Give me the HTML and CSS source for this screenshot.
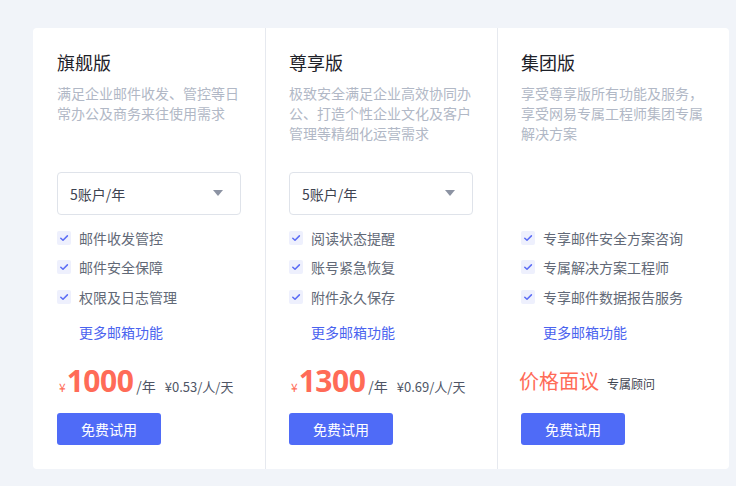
FILE: index.html
```html
<!DOCTYPE html>
<html lang="zh">
<head>
<meta charset="utf-8">
<link rel="stylesheet" href="styles.css">
</head>
<body>
<div class="card">
  <div class="col">
    <div class="title">旗舰版</div>
    <div class="desc">满足企业邮件收发、管控等日常办公及商务来往使用需求</div>
    <div class="select"><span>5账户/年</span><i class="arrow"></i></div>
    <ul class="features">
      <li><span class="chk"><svg viewBox="0 0 14 14"><path d="M3.8 7.2 L6 9.3 L10.4 4.9" /></svg></span>邮件收发管控</li>
      <li><span class="chk"><svg viewBox="0 0 14 14"><path d="M3.8 7.2 L6 9.3 L10.4 4.9" /></svg></span>邮件安全保障</li>
      <li><span class="chk"><svg viewBox="0 0 14 14"><path d="M3.8 7.2 L6 9.3 L10.4 4.9" /></svg></span>权限及日志管理</li>
    </ul>
    <a class="more">更多邮箱功能</a>
    <div class="price"><span class="yen">¥</span><span class="num">1000</span><span class="unit">/年</span><span class="per">¥0.53/人/天</span></div>
    <button class="btn">免费试用</button>
  </div>
  <div class="col">
    <div class="title">尊享版</div>
    <div class="desc">极致安全满足企业高效协同办公、打造个性企业文化及客户管理等精细化运营需求</div>
    <div class="select"><span>5账户/年</span><i class="arrow"></i></div>
    <ul class="features">
      <li><span class="chk"><svg viewBox="0 0 14 14"><path d="M3.8 7.2 L6 9.3 L10.4 4.9" /></svg></span>阅读状态提醒</li>
      <li><span class="chk"><svg viewBox="0 0 14 14"><path d="M3.8 7.2 L6 9.3 L10.4 4.9" /></svg></span>账号紧急恢复</li>
      <li><span class="chk"><svg viewBox="0 0 14 14"><path d="M3.8 7.2 L6 9.3 L10.4 4.9" /></svg></span>附件永久保存</li>
    </ul>
    <a class="more">更多邮箱功能</a>
    <div class="price"><span class="yen">¥</span><span class="num">1300</span><span class="unit">/年</span><span class="per">¥0.69/人/天</span></div>
    <button class="btn">免费试用</button>
  </div>
  <div class="col">
    <div class="title">集团版</div>
    <div class="desc">享受尊享版所有功能及服务，享受网易专属工程师集团专属解决方案</div>
    <div class="select-space"></div>
    <ul class="features">
      <li><span class="chk"><svg viewBox="0 0 14 14"><path d="M3.8 7.2 L6 9.3 L10.4 4.9" /></svg></span>专享邮件安全方案咨询</li>
      <li><span class="chk"><svg viewBox="0 0 14 14"><path d="M3.8 7.2 L6 9.3 L10.4 4.9" /></svg></span>专属解决方案工程师</li>
      <li><span class="chk"><svg viewBox="0 0 14 14"><path d="M3.8 7.2 L6 9.3 L10.4 4.9" /></svg></span>专享邮件数据报告服务</li>
    </ul>
    <a class="more">更多邮箱功能</a>
    <div class="price negotiate"><span class="talk">价格面议</span><span class="adv">专属顾问</span></div>
    <button class="btn">免费试用</button>
  </div>
</div>
</body>
</html>
```
FILE: styles.css
```css
* { box-sizing: border-box; }
html, body { margin: 0; padding: 0; }
body {
  background: #f1f4f9;
  font-family: "Noto Sans CJK SC", "Noto Sans", sans-serif;
  width: 736px;
  height: 486px;
  overflow: hidden;
}
.card {
  margin: 28px 0 0 33px;
  width: 696px;
  height: 441px;
  background: #fff;
  border-radius: 4px;
  display: grid;
  grid-template-columns: 232px 232px 232px;
}
.col {
  padding: 20px 24px 0 24px;
  display: flex;
  flex-direction: column;
  align-items: flex-start;
  border-left: 1px solid #e6e9ef;
}
.col:first-child { border-left: none; }
.col:not(:first-child) { padding-left: 23px; }
.title {
  font-size: 18px;
  line-height: 28px;
  color: #1d2129;
  height: 28px;
}
.desc {
  margin-top: 7px;
  font-size: 14px;
  line-height: 20px;
  color: #b1b8c6;
  height: 89px;
  width: 184px;
}
.select {
  width: 184px;
  height: 43px;
  border: 1px solid #dfe3ea;
  border-radius: 4px;
  display: flex;
  align-items: center;
  justify-content: space-between;
  padding: 0 17px 0 12px;
  font-size: 14px;
  color: #3d4350;
}
.select-space { height: 43px; }
.arrow {
  width: 0; height: 0;
  border-left: 5px solid transparent;
  border-right: 5px solid transparent;
  border-top: 6px solid #8c93a3;
  margin-top: -2px;
}
.features {
  list-style: none;
  margin: 8px 0 0 0;
  padding: 0;
}
.features li {
  height: 29.5px;
  display: flex;
  align-items: center;
  font-size: 14px;
  color: #626977;
}
.chk {
  width: 14px; height: 14px;
  border-radius: 2px;
  background: #eef0fd;
  margin-right: 8px;
  display: flex;
}
.chk svg { width: 14px; height: 14px; }
.chk path { fill: none; stroke: #5b6cf5; stroke-width: 1.5; stroke-linecap: round; stroke-linejoin: round; }
.more {
  margin: 10px 0 0 22px;
  font-size: 14px;
  line-height: 20px;
  color: #4a63ef;
  cursor: pointer;
}
.price {
  margin-top: 21px;
  height: 36px;
  display: flex;
  align-items: baseline;
  white-space: nowrap;
}
.yen { font-size: 12px; color: #ff6b57; margin: 0 1px 0 2px; }
.num {
  font-family: "Open Sans", sans-serif;
  font-weight: 700;
  font-size: 30px;
  line-height: 36px;
  color: #ff6b57;
  letter-spacing: -0.5px;
}
.unit { font-size: 14px; color: #4e5565; margin-left: 3px; }
.per { font-size: 13px; color: #4e5565; margin-left: 9px; }
.negotiate { margin-left: -2px; }
.talk { font-size: 20px; line-height: 36px; color: #ff6b57; }
.adv { font-size: 12px; color: #3d4350; margin-left: 8px; }
.btn {
  margin-top: 14px;
  width: 104px;
  height: 32px;
  border: none;
  border-radius: 3px;
  background: #4f6bf7;
  color: #fff;
  font-family: "Noto Sans CJK SC", sans-serif;
  font-size: 14px;
  padding: 0;
}
```
